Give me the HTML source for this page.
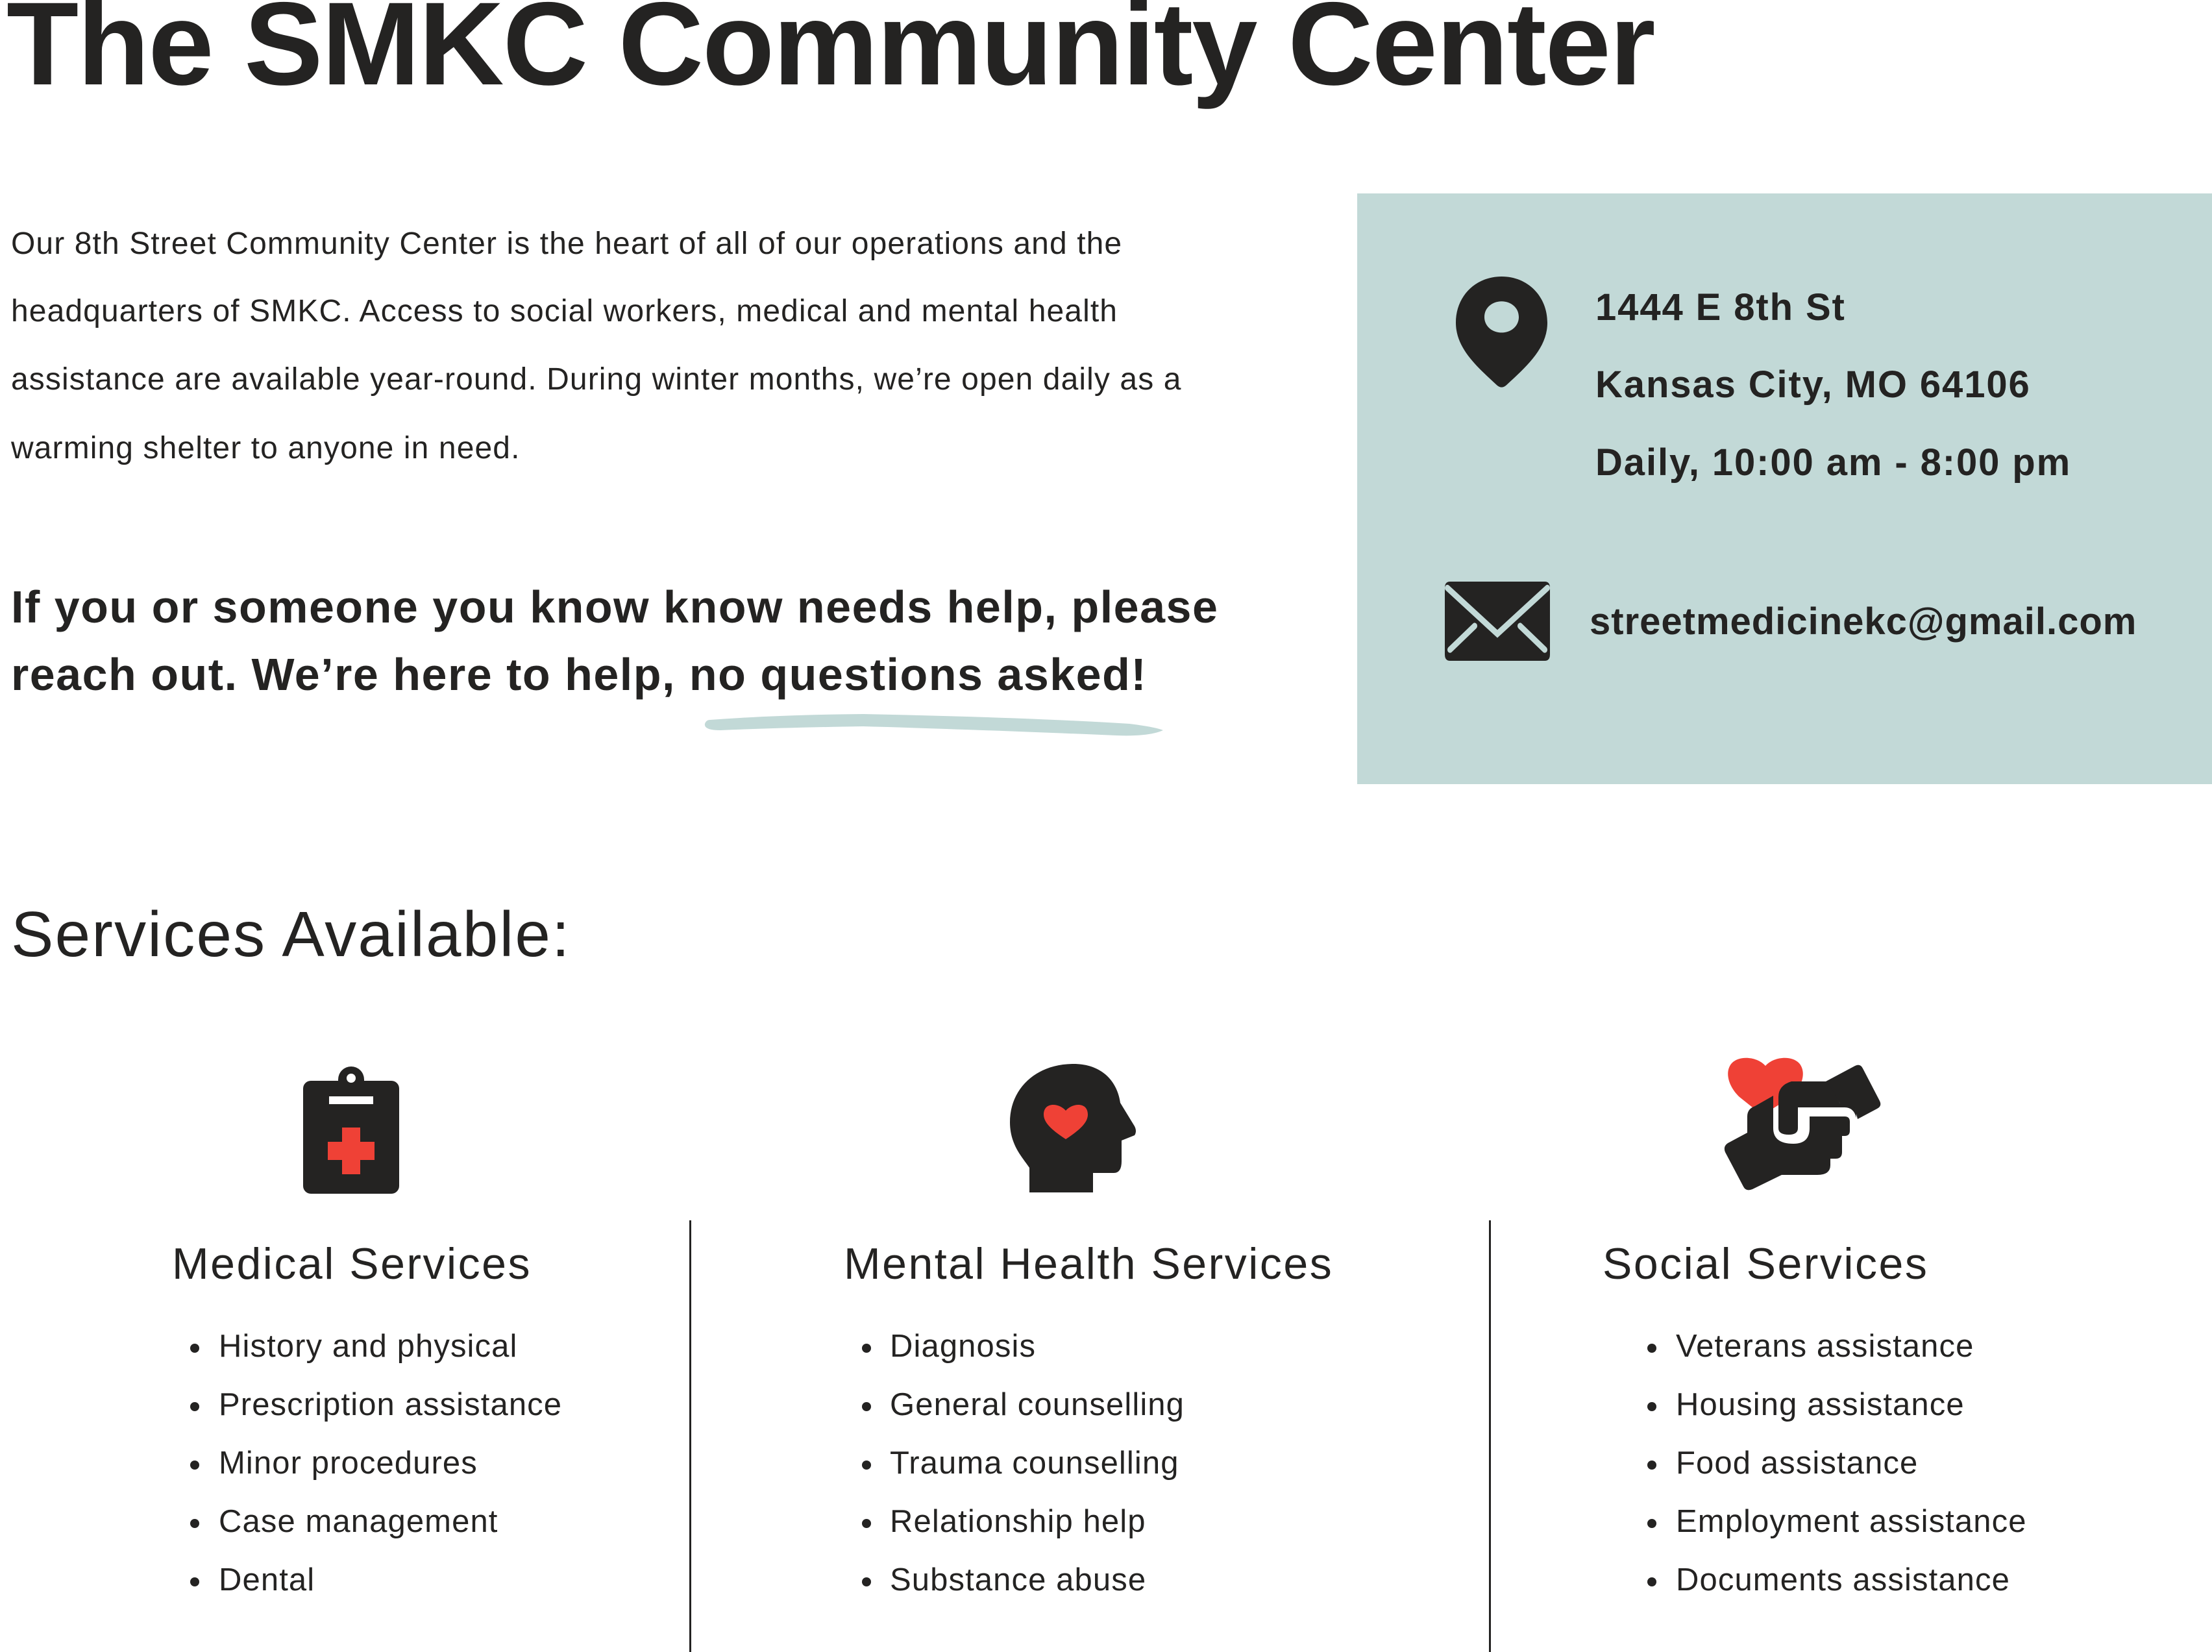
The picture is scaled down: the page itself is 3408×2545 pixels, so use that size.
<!DOCTYPE html>
<html><head><meta charset="utf-8"><style>
html,body{margin:0;padding:0;background:#fff}
body{width:3408px;height:2545px;position:relative;overflow:hidden;font-family:"Liberation Sans",sans-serif;color:#242322}
.a{position:absolute;white-space:nowrap}
h1{position:absolute;left:10px;top:-38px;margin:0;font-size:182px;font-weight:bold;letter-spacing:-2px;white-space:nowrap}
.p{position:absolute;left:17px;font-size:48px;line-height:1;letter-spacing:1.1px}
.b{position:absolute;left:17px;font-size:70px;font-weight:bold;line-height:1;letter-spacing:1.5px}
.box{position:absolute;left:2091px;top:298px;width:1317px;height:910px;background:#c2d9d7}
.ad{position:absolute;left:2458px;font-size:58px;font-weight:bold;line-height:1;letter-spacing:1.9px}
.h2{position:absolute;font-size:68px;line-height:1;white-space:nowrap;letter-spacing:2.5px}
.li{position:absolute;font-size:49px;line-height:1;white-space:nowrap;letter-spacing:1.1px}
.dot{position:absolute;width:14px;height:14px;border-radius:50%;background:#242322}
.div{position:absolute;top:1880px;width:3px;height:665px;background:#242322}
</style></head><body>
<h1>The SMKC Community Center</h1>
<div class="p a" style="top:352px">Our 8th Street Community Center is the heart of all of our operations and the</div>
<div class="p a" style="top:456px">headquarters of SMKC. Access to social workers, medical and mental health</div>
<div class="p a" style="top:561px">assistance are available year-round. During winter months, we’re open daily as a</div>
<div class="p a" style="top:667px">warming shelter to anyone in need.</div>
<div class="b a" style="top:900px">If you or someone you know know needs help, please</div>
<div class="b a" style="top:1004px">reach out. We’re here to help, no questions asked!</div>
<svg class="a" style="left:1080px;top:1095px" width="720" height="45" viewBox="0 0 720 45"><path d="M14,14 Q120,6 250,5 Q500,10 660,20 Q700,25 712,30 Q690,40 640,38 Q400,28 250,24 Q120,26 30,30 Q4,30 6,20 Q8,14 14,14Z" fill="#c2d9d7"/></svg>
<div class="box"></div>
<svg class="a" style="left:2243px;top:426px" width="141" height="175" viewBox="0 0 141 160" preserveAspectRatio="none"><path d="M70.5,0 C30,0 0,28 0,65 C0,100 30,125 62,152 Q70.5,160 79,152 C111,125 141,100 141,65 C141,28 111,0 70.5,0Z M70.5,35 C85,35 97,44 97,57 C97,70 85,79 70.5,79 C56,79 44,70 44,57 C44,44 56,35 70.5,35Z" fill="#242322" fill-rule="evenodd"/></svg>
<div class="ad a" style="top:445px">1444 E 8th St</div>
<div class="ad a" style="top:564px">Kansas City, MO 64106</div>
<div class="ad a" style="top:684px">Daily, 10:00 am - 8:00 pm</div>
<svg class="a" style="left:2226px;top:806px" width="162" height="100" viewBox="0 0 162 100"></svg>
<svg class="a" style="left:2226px;top:896px" width="162" height="122" viewBox="0 0 162 100" preserveAspectRatio="none"><path d="M8,0 L154,0 Q162,0 162,8 L162,92 Q162,100 154,100 L8,100 Q0,100 0,92 L0,8 Q0,0 8,0Z" fill="#242322"/><path d="M4,8 L81,66 L158,8 M8,86 L46,56 M154,86 L116,56" stroke="#c2d9d7" stroke-width="8" fill="none" stroke-linecap="round"/></svg>
<div class="ad a" style="left:2449px;top:929px;letter-spacing:1px">streetmedicinekc@gmail.com</div>
<div class="a" style="left:17px;top:1390px;font-size:98px;line-height:1;letter-spacing:2.2px">Services Available:</div>
<svg class="a" style="left:467px;top:1643px" width="148" height="196" viewBox="0 0 148 196"><rect x="0" y="22" width="148" height="174" rx="12" fill="#242322"/><path d="M54,28 L54,20 A20,20 0 0 1 94,20 L94,28Z" fill="#242322"/><ellipse cx="74" cy="18" rx="7" ry="7" fill="#fff"/><rect x="40" y="46" width="68" height="12" fill="#fff"/><path d="M60,94 H88 V116 H110 V144 H88 V166 H60 V144 H38 V116 H60Z" fill="#ef4136"/></svg>
<svg class="a" style="left:1556px;top:1639px" width="196" height="198" viewBox="0 0 196 198"><path d="M98,0 C40,0 0,38 0,90 C0,125 20,145 30,160 L30,198 L128,198 L128,168 L160,168 Q172,168 172,150 L172,118 L192,110 Q196,104 192,96 L170,60 C165,25 140,0 98,0Z" fill="#242322"/><path d="M86,72 C76,60 52,58 52,78 C52,92 68,104 86,116 C104,104 120,92 120,78 C120,58 96,60 86,72Z" fill="#ef4136"/></svg>
<svg class="a" style="left:2620px;top:1600px" width="300" height="260" viewBox="0 0 300 260"><path d="M100,42 C88,28 60,25 48,38 C36,52 44,75 60,90 L95,118 L140,90 C156,75 164,52 152,38 C140,25 112,28 100,42Z" fill="#ef4136"/><path d="M193,66 L238,42 Q246,38 250,46 L276,96 Q280,104 272,108 L242,124 L238,108 Q230,100 215,100Z" fill="#242322"/><path d="M72,145 L72,120 Q72,108 84,104 L112,88 L112,138 Q112,162 143,162 Q168,162 168,138 L168,120 L222,120 Q230,120 230,128 L230,142 Q230,150 222,150 L218,150 L218,175 Q218,185 208,185 L200,185 L200,195 Q200,210 180,210 L125,210 L80,232 Q70,236 66,228 L38,175 Q34,165 44,160Z" fill="#242322"/><path d="M120,90 Q120,72 140,66 L195,66 L215,100 L222,100 Q236,100 240,112 L240,122 Q236,106 222,106 L150,106 L150,138 Q150,148 136,148 Q120,148 120,138Z" fill="#242322"/></svg>
<div class="div" style="left:1062px"></div>
<div class="div" style="left:2294px"></div>
<div class="h2" style="left:265px;top:1913px">Medical Services</div>
<div class="h2" style="left:1300px;top:1913px">Mental Health Services</div>
<div class="h2" style="left:2469px;top:1913px">Social Services</div>

<div class="dot" style="left:293px;top:2070px"></div><div class="li" style="left:337px;top:2050px">History and physical</div>
<div class="dot" style="left:293px;top:2160px"></div><div class="li" style="left:337px;top:2140px">Prescription assistance</div>
<div class="dot" style="left:293px;top:2250px"></div><div class="li" style="left:337px;top:2230px">Minor procedures</div>
<div class="dot" style="left:293px;top:2340px"></div><div class="li" style="left:337px;top:2320px">Case management</div>
<div class="dot" style="left:293px;top:2430px"></div><div class="li" style="left:337px;top:2410px">Dental</div>

<div class="dot" style="left:1328px;top:2070px"></div><div class="li" style="left:1371px;top:2050px">Diagnosis</div>
<div class="dot" style="left:1328px;top:2160px"></div><div class="li" style="left:1371px;top:2140px">General counselling</div>
<div class="dot" style="left:1328px;top:2250px"></div><div class="li" style="left:1371px;top:2230px">Trauma counselling</div>
<div class="dot" style="left:1328px;top:2340px"></div><div class="li" style="left:1371px;top:2320px">Relationship help</div>
<div class="dot" style="left:1328px;top:2430px"></div><div class="li" style="left:1371px;top:2410px">Substance abuse</div>

<div class="dot" style="left:2538px;top:2070px"></div><div class="li" style="left:2582px;top:2050px">Veterans assistance</div>
<div class="dot" style="left:2538px;top:2160px"></div><div class="li" style="left:2582px;top:2140px">Housing assistance</div>
<div class="dot" style="left:2538px;top:2250px"></div><div class="li" style="left:2582px;top:2230px">Food assistance</div>
<div class="dot" style="left:2538px;top:2340px"></div><div class="li" style="left:2582px;top:2320px">Employment assistance</div>
<div class="dot" style="left:2538px;top:2430px"></div><div class="li" style="left:2582px;top:2410px">Documents assistance</div>
</body></html>
